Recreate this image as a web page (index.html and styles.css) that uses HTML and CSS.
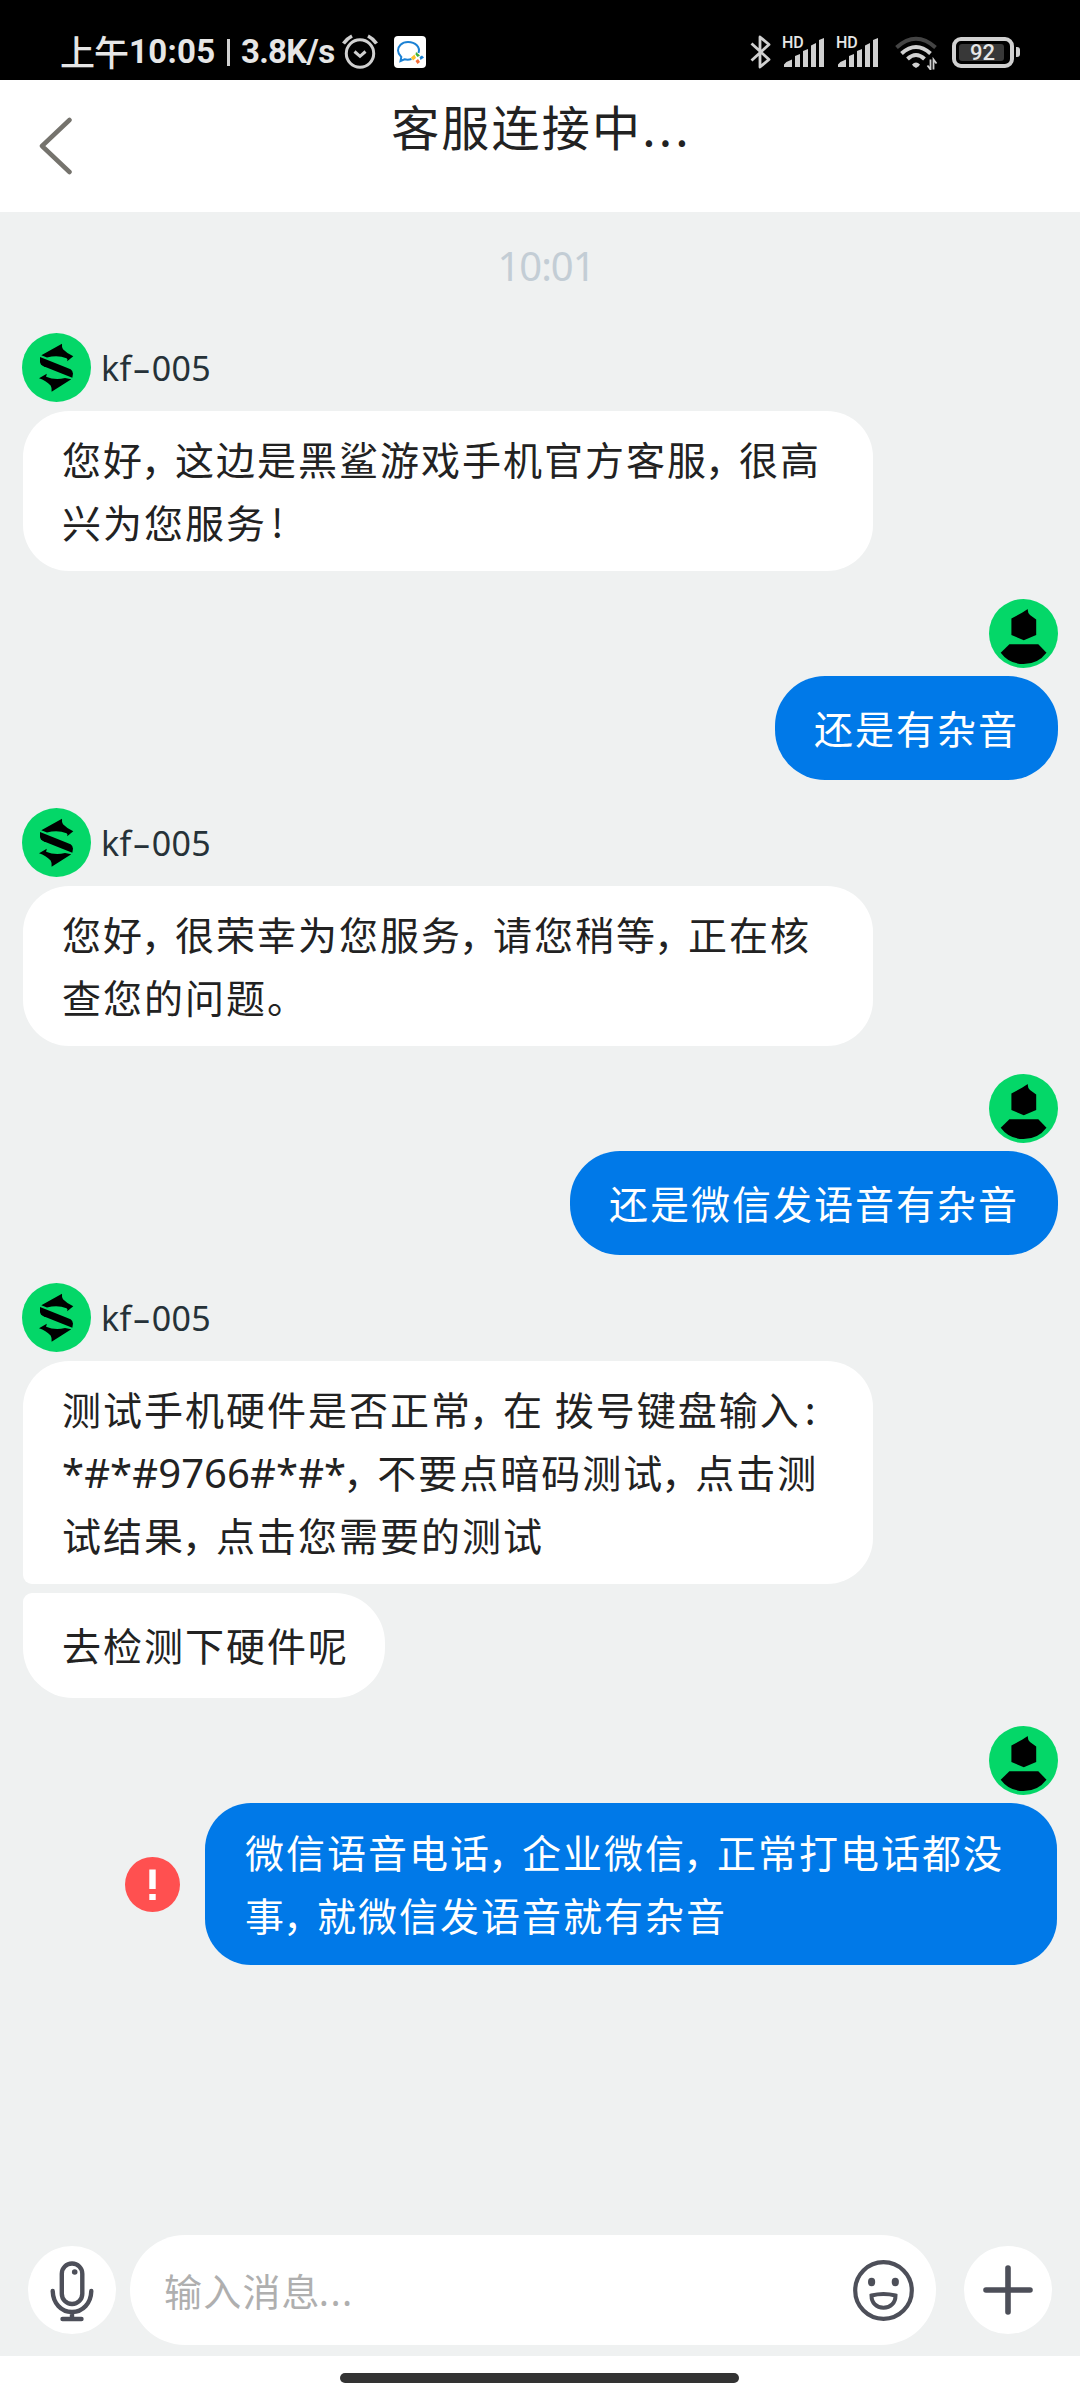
FILE: index.html
```html
<!DOCTYPE html>
<html lang="zh-CN">
<head>
<meta charset="utf-8">
<title>客服连接中...</title>
<link rel="stylesheet" href="styles.css">
</head>
<body>
<svg class="defs" aria-hidden="true">
  <symbol id="shark" viewBox="0 0 69 69">
    <circle cx="34.5" cy="34.5" r="34.5" fill="#04d768"/>
    <path d="M19.3 22.3 40 10.7Q39.600 14.500 41 16.300 45 20.500 51.300 23.300L45.200 28.300Q46 25.800 44.500 25.300 36 21.500 25 24.400Z"/>
    <path d="M18 24 48.600 36.200Q51.200 38 51 40.700L50.300 44.700 21.500 33.200Q18 31.500 18 28.500Z"/>
    <path d="M17 45.300 24.800 40.700 24.100 43.700Q33 47.500 43 45L49.300 46.300 29.600 58.700Q30 54.500 28.600 52.500 24 47.500 17 45.300Z"/>
  </symbol>
  <symbol id="user" viewBox="0 0 69 69">
    <circle cx="34.500" cy="34.500" r="34.500" fill="#04d768"/>
    <path d="M38.800 10Q38.500 14 41 16L47.200 20.500V36L34.800 41.300 22.400 36V19.500L33 13.800Z"/>
    <path d="M20.400 45.300H49.300L57.500 53.700Q49 65 34.600 65 20 65 11.700 53.700Z"/>
  </symbol>
  <symbol id="signal" viewBox="0 0 41 29">
    <path d="M0 29V26.500Q3 23 8 21.500V29ZM11 29V18L16 16V29ZM19 29V13L24 11V29ZM27 29V7.500L32 5V29ZM35 29V2L40 0V29Z"/>
  </symbol>
</svg>

<div class="status">
  <div class="status-left">
    <span class="ampm">上午</span><span class="clock">10:05</span><span class="rule"></span><span class="speed">3.8K/s</span>
    <svg class="alarm" viewBox="0 0 36 36"><g fill="none" stroke="#d0d0d0" stroke-width="3"><circle cx="18" cy="19.500" r="13.700"/><path d="M12.500 17.500 18 22.300 23.500 17.500"/><path d="M1.500 9.500Q5 4.500 10 2M26 2Q31 4.500 34.500 9.500" stroke-width="3.600"/></g></svg>
    <svg class="wecom" viewBox="0 0 32 32"><rect width="32" height="32" rx="4" fill="#fff"/><path d="M24.500 17C26.500 11 21.500 6 14 6 7.500 6 4 10.500 4 14.500 4 17.500 5.300 19 7.300 21L6.500 25 10.500 23.300Q14 24.300 17.500 23" fill="none" stroke="#1b81d4" stroke-width="2"/><path d="M17 21.500 20.500 18.500 22 22 19 24.500Z" fill="#fbc02d"/><path d="M22 16 26 19.500 23.500 21 21.500 18.500Z" fill="#41b035"/><path d="M25.500 21 28 19.500 30 21.500 26.500 24Z" fill="#1b81d4"/><path d="M21.500 25 24 23 26 26 23.500 28Z" fill="#f26b35"/></svg>
  </div>
  <div class="status-right">
    <svg class="bt" viewBox="0 0 22 34"><path d="M1.500 8.500 19 24.500 10 32V2L19 9.500 1.500 25.500" fill="none" stroke="#d0d0d0" stroke-width="2.800" stroke-linejoin="round"/></svg>
    <div class="cell"><svg><use href="#signal"/></svg><span class="hd">HD</span></div>
    <div class="cell"><svg><use href="#signal"/></svg><span class="hd">HD</span></div>
    <svg class="wifi" viewBox="0 0 44 34"><g fill="none" stroke="#d0d0d0" stroke-width="4"><path d="M1.500 11.500Q21 -6 40.500 11.500" stroke="#444"/><path d="M6.500 17.500Q21 4.500 35.500 17.500"/><path d="M12.500 23Q21 15 29.500 23"/></g><path d="M17 28.500Q21 24.500 25 28.500 24.500 30 21 32 17.500 30 17 28.500Z" fill="#d0d0d0"/><path d="M35.500 23.500V33.500L32.500 29.500M38.500 33.500V23.500L41.500 27.500" fill="none" stroke="#d0d0d0" stroke-width="1.800"/></svg>
    <div class="battery"><span class="level">92</span></div><span class="tip"></span>
  </div>
</div>

<header class="header">
  <svg class="back" viewBox="0 0 34 58"><path d="M30.500 3 3 29 30.500 55" fill="none" stroke="#75736d" stroke-width="4.500" stroke-linecap="round" stroke-linejoin="round"/></svg>
  <h1 class="title">客服连接中<span class="dots">...</span></h1>
</header>

<main class="chat">
  <div class="time">10:01</div>

  <section class="msg">
    <div class="who"><svg class="avatar"><use href="#shark"/></svg><span class="name">kf<span class="dash">-</span>005</span></div>
    <div class="bubble wide">您好<i>，</i>这边是黑鲨游戏手机官方客服<i>，</i>很高<br>兴为您服务<b>!</b></div>
  </section>

  <section class="msg mine">
    <svg class="avatar"><use href="#user"/></svg>
    <div class="bubble short">还是有杂音</div>
  </section>

  <section class="msg">
    <div class="who"><svg class="avatar"><use href="#shark"/></svg><span class="name">kf<span class="dash">-</span>005</span></div>
    <div class="bubble wide">您好<i>，</i>很荣幸为您服务<i>，</i>请您稍等<i>，</i>正在核<br>查您的问题。</div>
  </section>

  <section class="msg mine">
    <svg class="avatar"><use href="#user"/></svg>
    <div class="bubble short">还是微信发语音有杂音</div>
  </section>

  <section class="msg">
    <div class="who"><svg class="avatar"><use href="#shark"/></svg><span class="name">kf<span class="dash">-</span>005</span></div>
    <div class="bubble wide first">测试手机硬件是否正常<i>，</i>在 拨号键盘输入<b>:</b><br><span class="code">*#*#9766#*#*</span><i>，</i>不要点暗码测试<i>，</i>点击测<br>试结果<i>，</i>点击您需要的测试</div>
    <div class="bubble short last">去检测下硬件呢</div>
  </section>

  <section class="msg mine">
    <svg class="avatar"><use href="#user"/></svg>
    <div class="failed">
      <svg class="alert" viewBox="0 0 55 55"><circle cx="27.500" cy="27.500" r="27.500" fill="#ff5050"/><path d="M24.300 12.500H30.700V32H24.300ZM24.300 37H30.700V43H24.300Z" fill="#fff"/></svg>
      <div class="bubble wide">微信语音电话<i>，</i>企业微信<i>，</i>正常打电话都没<br>事<i>，</i>就微信发语音就有杂音</div>
    </div>
  </section>
</main>

<footer class="composer">
  <div class="round"><svg viewBox="0 0 88 88"><g fill="none" stroke="#4d4f59" stroke-width="4.400" stroke-linecap="round"><rect x="33.800" y="17.500" width="20.500" height="40.500" rx="10.200"/><path d="M24.700 45C25 57 33 66 44 66S63 57 63.300 45M44 66V72M34.500 73H53.500"/></g><circle cx="46.700" cy="26" r="2.800" fill="#4d4f59"/></svg></div>
  <div class="field">
    <span class="placeholder">输入消息<span class="pdots">...</span></span>
    <svg class="emoji" viewBox="0 0 61 61"><g fill="none" stroke="#4d4f59"><circle cx="30.500" cy="30.500" r="28.300" stroke-width="4.200"/><path d="M18.500 35.500Q30.500 32.500 42.500 35.500C42.500 43 37.500 47.800 30.500 47.800S18.500 43 18.500 35.500Z" stroke-width="4"/></g><g fill="#4d4f59"><ellipse cx="18.600" cy="22" rx="3.600" ry="4.200"/><ellipse cx="42.300" cy="22" rx="3.600" ry="4.200"/></g></svg>
  </div>
  <div class="round plus"><svg viewBox="0 0 88 88"><path d="M44 22V66M22 44H66" fill="none" stroke="#4d4f59" stroke-width="5.600" stroke-linecap="round"/></svg></div>
</footer>
<div class="nav"><span class="home"></span></div>
</body>
</html>
```

FILE: styles.css
```css
* { box-sizing: border-box; }
body {
  margin: 0;
  width: 1080px;
  height: 2400px;
  display: flex;
  flex-direction: column;
  overflow: hidden;
  background: #eff1f1;
  font-family: "Noto Sans CJK SC", sans-serif;
  color: #222;
}
svg { display: block; flex: none; }
.defs { position: absolute; width: 0; height: 0; }

.status {
  height: 80px;
  flex: none;
  background: #000;
  color: #e6e6e6;
  display: flex;
  justify-content: space-between;
  padding: 0 60px 0 60px;
  white-space: nowrap;
}
.status-left, .status-right { display: flex; align-items: center; padding-top: 24px; }
.ampm { width: 69px; font-size: 35px; line-height: 50px; margin-top: -3px; font-weight: 500; letter-spacing: -1px; }
.clock, .speed { font: 700 33px/50px Roboto, sans-serif; }
.clock { width: 98px; letter-spacing: .3px; }
.rule { width: 3px; height: 27px; background: #d0d0d0; margin-right: 11px; }
.speed { width: 101px; letter-spacing: -.7px; }
.alarm { width: 36px; height: 36px; }
.wecom { width: 32px; height: 32px; margin-left: 16px; }
.bt { width: 22px; height: 34px; margin: 0 12px 0 0; }
.cell { position: relative; width: 41px; height: 29px; margin: 0 13px 0 0; }
.cell svg { width: 41px; height: 29px; fill: #d0d0d0; }
.hd { position: absolute; left: -2px; top: -4px; font: 500 16px/18px Roboto, sans-serif; }
.wifi { width: 44px; height: 34px; margin: 2px 13px 0 3px; }
.battery {
  width: 62px;
  height: 31px;
  border: 4px solid #d0d0d0;
  border-radius: 9px;
  padding: 3px 6px 3px 3px;
}
.level {
  display: block;
  height: 17px;
  border-radius: 3px;
  background: #383838;
  font: 500 22px/18px Roboto, sans-serif;
  text-align: center;
  padding-left: 2px;
}
.tip { width: 4px; height: 10px; border-radius: 0 3px 3px 0; background: #d0d0d0; margin: 0 0 0 2px; }

.header { height: 132px; flex: none; background: #fff; display: grid; grid-template-columns: 80px 1fr 80px; }
.back { width: 34px; height: 58px; margin: 37px 0 0 39px; }
.title { margin: 10px 0 0; padding-left: 3px; text-align: center; font-weight: 400; font-size: 48px; line-height: 70px; letter-spacing: 2.200px; }
.dots { letter-spacing: 3.200px; }

.chat { flex: 1; padding: 0 22px; display: flex; flex-direction: column; }
.time {
  height: 121px;
  padding: 29px 0 0 12px;
  text-align: center;
  font: 400 40px/50px "Noto Sans", sans-serif;
  letter-spacing: -1px;
  color: #c3cdd5;
}
.msg { display: flex; flex-direction: column; align-items: flex-start; margin-bottom: 28px; }
.who { display: flex; align-items: center; margin-bottom: 9px; }
.avatar { width: 69px; height: 69px; }
.name { font: 400 34px/40px "Noto Sans", sans-serif; letter-spacing: .4px; color: #263238; padding-left: 10px; }
.dash { display: inline-block; width: 20px; text-align: center; transform: scaleX(1.7); }
.bubble {
  background: #fff;
  border-radius: 46px;
  margin-left: 1px;
  padding: 16px 0 18px 39px;
  font-size: 39px;
  line-height: 63px;
  letter-spacing: 2px;
  white-space: nowrap;
}
.bubble i { font-style: normal; margin-left: -3px; letter-spacing: -5px; }
.bubble b { font-weight: 400; padding-left: 4px; }
.code { font-family: "Noto Sans", sans-serif; font-size: 40px; line-height: 1; letter-spacing: .1px; }
.wide { width: 850px; }
.short { padding: 20px 39px 21px 39px; border-radius: 50px; }
.first { border-bottom-left-radius: 9px; margin-bottom: 9px; }
.last { border-top-left-radius: 9px; padding: 20px 36px 22px 39px; }
.mine { align-items: flex-end; }
.mine .avatar { margin-bottom: 8px; }
.mine .bubble { background: #0079e8; color: #fff; margin-left: 0; }
.failed { display: flex; align-items: center; gap: 25px; padding-right: 1px; }
.failed .wide { width: 852px; padding: 17px 0 19px 40px; }
.alert { width: 55px; height: 55px; }

.composer { height: 121px; flex: none; display: flex; align-items: flex-start; padding-left: 28px; }
.round { width: 88px; height: 88px; border-radius: 50%; background: #fff; margin-top: 11px; }
.plus { margin-left: 28px; }
.field {
  width: 806px;
  height: 110px;
  border-radius: 55px;
  background: #fff;
  margin-left: 14px;
  padding: 0 22px 0 34px;
  display: flex;
  align-items: center;
  justify-content: space-between;
}
.placeholder { font-size: 38px; line-height: 60px; letter-spacing: 1.200px; color: #afafaf; }
.pdots { margin-left: -2px; letter-spacing: 1.400px; }
.pdots { font-family: "Noto Sans", sans-serif; line-height: 1; }
.emoji { width: 61px; height: 61px; }
.nav { height: 44px; flex: none; background: #fff; display: flex; justify-content: center; padding: 17px 1px 0 0; }
.home { width: 399px; height: 10px; border-radius: 5px; background: #333; }
```
